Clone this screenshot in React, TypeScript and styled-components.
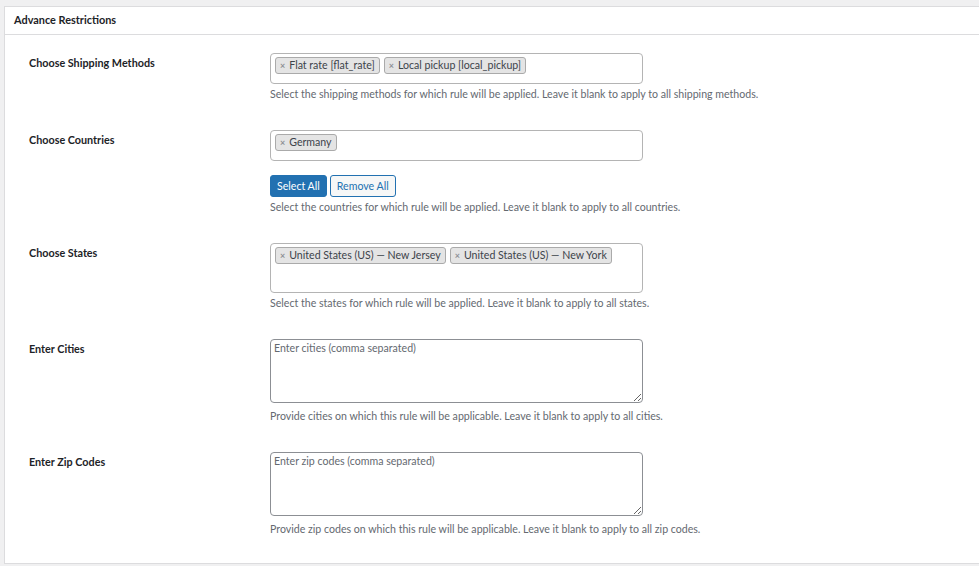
import React from "react"
import styled, { createGlobalStyle } from "styled-components"

const GlobalStyle = createGlobalStyle`
    html, body {
        margin: 0;
        padding: 0;
        background: #f0f0f1;
        overflow: hidden;
    }
    body {
        font-family: Lato, "Open Sans", sans-serif;
        font-size: 10.6px;
        color: #1d2327;
    }
`

interface FieldProps {
    label: string
    description: string
    children: React.ReactNode
}

function Field({ label, description, children }: FieldProps) {
    return (
        <Row>
            <Label>{label}</Label>
            <Control>
                {children}
                <Description>{description}</Description>
            </Control>
        </Row>
    )
}

function MultiSelect({ items, tall }: { items: string[]; tall?: boolean }) {
    return (
        <SelectBox $tall={tall}>
            {items.map((item) => (
                <Tag key={item}>
                    <Remove>×</Remove>
                    {item}
                </Tag>
            ))}
        </SelectBox>
    )
}

export default function App() {
    return (
        <>
            <GlobalStyle />
            <Panel>
                <Header>Advance Restrictions</Header>
                <Body>
                    <Field
                        label="Choose Shipping Methods"
                        description="Select the shipping methods for which rule will be applied. Leave it blank to apply to all shipping methods."
                    >
                        <MultiSelect items={["Flat rate [flat_rate]", "Local pickup [local_pickup]"]} />
                    </Field>
                    <Field
                        label="Choose Countries"
                        description="Select the countries for which rule will be applied. Leave it blank to apply to all countries."
                    >
                        <MultiSelect items={["Germany"]} />
                        <Buttons>
                            <Button $primary>Select All</Button>
                            <Button>Remove All</Button>
                        </Buttons>
                    </Field>
                    <Field
                        label="Choose States"
                        description="Select the states for which rule will be applied. Leave it blank to apply to all states."
                    >
                        <MultiSelect tall items={["United States (US) — New Jersey", "United States (US) — New York"]} />
                    </Field>
                    <Field
                        label="Enter Cities"
                        description="Provide cities on which this rule will be applicable. Leave it blank to apply to all cities."
                    >
                        <TextArea placeholder="Enter cities (comma separated)" />
                    </Field>
                    <Field
                        label="Enter Zip Codes"
                        description="Provide zip codes on which this rule will be applicable. Leave it blank to apply to all zip codes."
                    >
                        <TextArea placeholder="Enter zip codes (comma separated)" />
                    </Field>
                </Body>
            </Panel>
        </>
    )
}

const Panel = styled.div`
    margin: 6px -20px 0 4px;
    background: #fff;
    border: 1px solid #dcdcde;
    height: 558px;
    box-sizing: border-box;
`
const Header = styled.h2`
    margin: 0;
    height: 28px;
    line-height: 26px;
    padding: 0 9px;
    font-size: 10.9px;
    font-weight: 700;
    border-bottom: 1px solid #dcdcde;
    box-sizing: border-box;
`
const Body = styled.div`
    display: flex;
    flex-direction: column;
    gap: 28px;
    padding: 18px 0 0 24px;
`
const Row = styled.div`
    display: grid;
    grid-template-columns: 241px 1fr;
`
const Label = styled.div`
    font-weight: 700;
    font-size: 10.8px;
    line-height: 16px;
    padding-top: 2px;
`
const Control = styled.div`
    display: flex;
    flex-direction: column;
    align-items: flex-start;
`
const SelectBox = styled.div<{ $tall?: boolean }>`
    box-sizing: border-box;
    width: 373px;
    min-height: ${(p) => (p.$tall ? "50px" : "31px")};
    border: 1px solid #b4b4b4;
    border-radius: 4px;
    padding: 3px 4px;
    display: flex;
    flex-wrap: wrap;
    align-content: flex-start;
    gap: 4px;
`
const Tag = styled.span`
    display: inline-flex;
    align-items: center;
    gap: 4px;
    height: 15px;
    padding: 0 4px;
    background: #e4e4e4;
    border: 1px solid #aaa;
    border-radius: 3px;
    color: #3c434a;
    font-size: 10.6px;
    line-height: 13px;
`
const Remove = styled.span`
    color: #8c8f94;
    font-size: 9px;
    font-weight: 700;
`
const Buttons = styled.div`
    display: flex;
    gap: 3px;
    margin-top: 14px;
`
const Button = styled.button<{ $primary?: boolean }>`
    height: 22px;
    padding: 0 6px;
    border: 1px solid #2271b1;
    border-radius: 3px;
    background: ${(p) => (p.$primary ? "#2271b1" : "#f6f7f7")};
    color: ${(p) => (p.$primary ? "#fff" : "#2271b1")};
    font-family: Lato, "Open Sans", sans-serif;
    font-size: 10.6px;
`
const TextArea = styled.textarea`
    box-sizing: border-box;
    width: 373px;
    height: 64px;
    margin-bottom: 3px;
    border: 1px solid #8c8f94;
    border-radius: 4px;
    padding: 1px 3px;
    font-family: Lato, "Open Sans", sans-serif;
    font-size: 10.6px;
    line-height: 14px;
    color: #2c3338;
    &::placeholder {
        color: #646970;
    }
`
const Description = styled.p`
    margin: 3px 0 0;
    font-size: 10.6px;
    line-height: 15px;
    color: #646970;
    white-space: nowrap;
`
